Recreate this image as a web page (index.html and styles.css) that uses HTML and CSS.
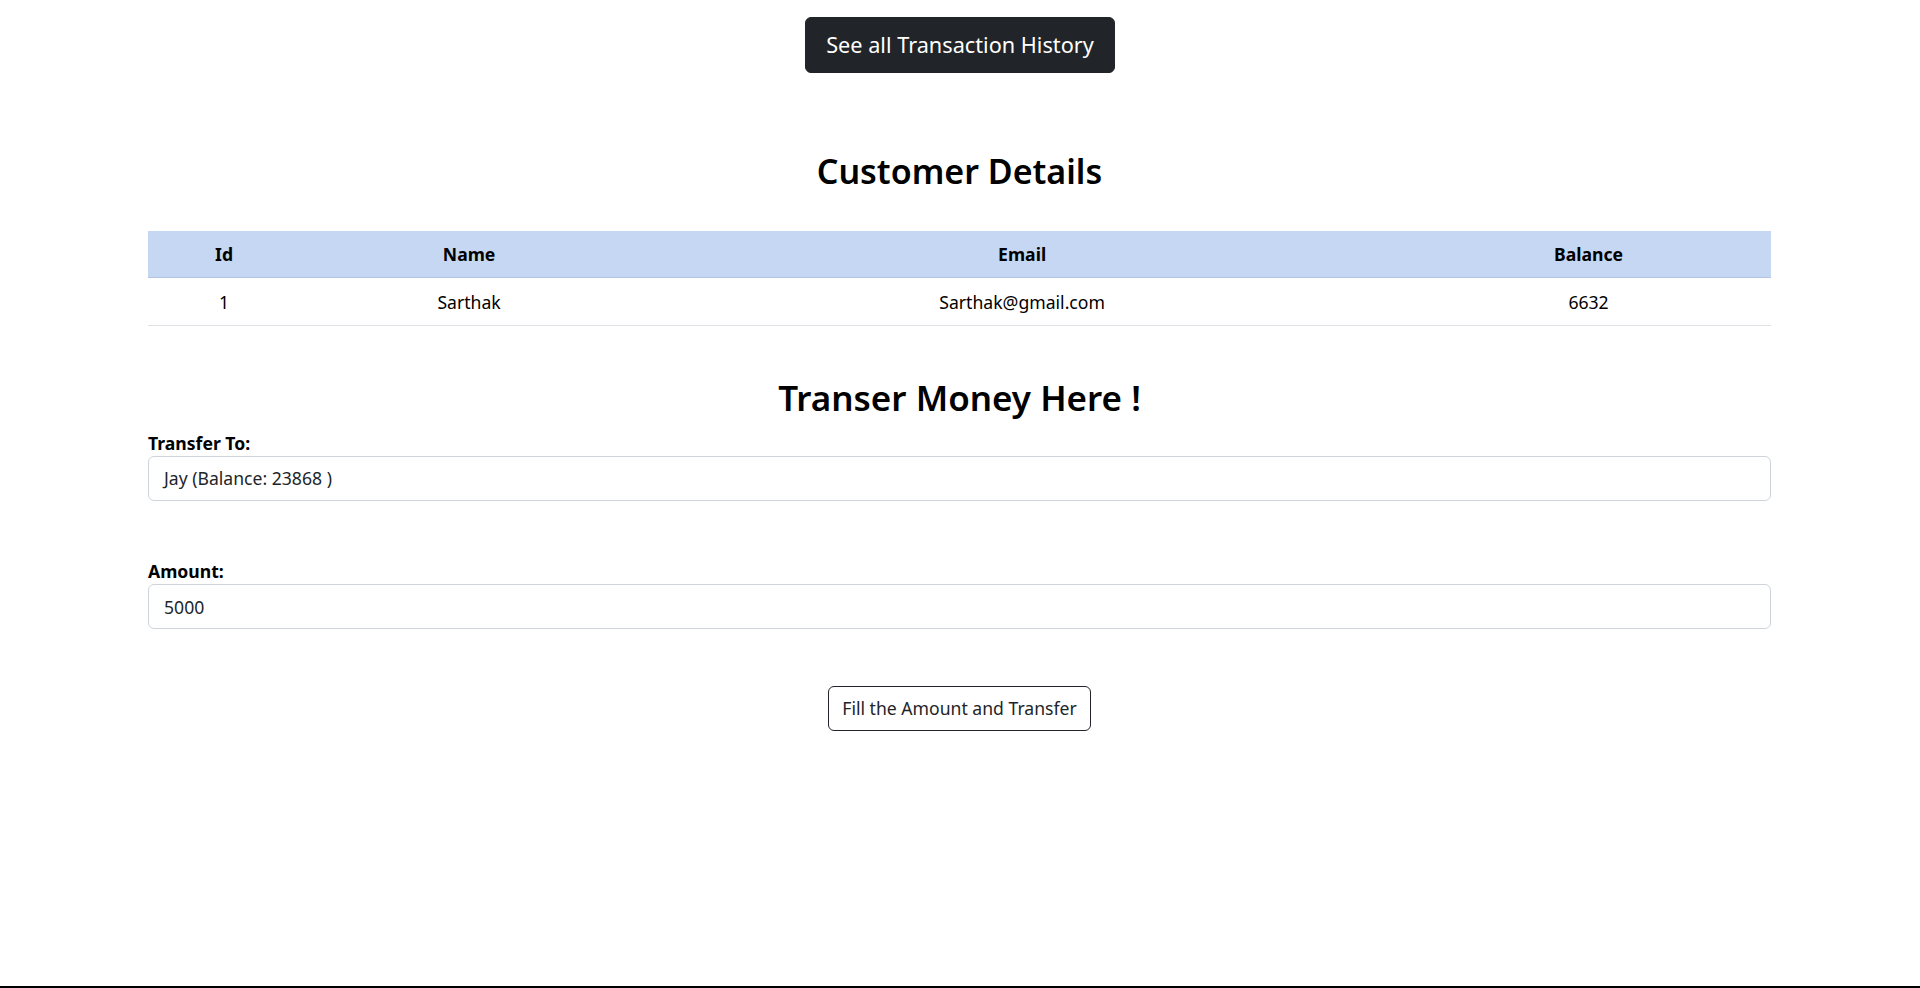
FILE: index.html
```html
<!DOCTYPE html>
<html lang="en">
<head>
<meta charset="utf-8">
<title>Customer Details</title>
<link rel="stylesheet" href="styles.css">
</head>
<body>
<div class="page">
  <div class="top-bar">
    <a class="btn btn-dark" href="#">See all Transaction History</a>
  </div>

  <main class="container">
    <h2 class="section-title first">Customer Details</h2>
    <table class="details">
      <colgroup>
        <col class="c-id">
        <col class="c-name">
        <col class="c-email">
        <col class="c-balance">
      </colgroup>
      <thead>
        <tr><th>Id</th><th>Name</th><th>Email</th><th>Balance</th></tr>
      </thead>
      <tbody>
        <tr><td>1</td><td>Sarthak</td><td>Sarthak@gmail.com</td><td>6632</td></tr>
      </tbody>
    </table>

    <h2 class="section-title second">Transer Money Here !</h2>
    <form class="transfer-form">
      <div class="field">
        <label class="field-label" for="to">Transfer To:</label>
        <div class="select-box" id="to">Jay (Balance: 23868 )</div>
      </div>
      <div class="field field-amount">
        <label class="field-label" for="amount">Amount:</label>
        <input class="text-input" id="amount" type="text" value="5000">
      </div>
      <div class="actions">
        <button class="btn btn-outline" type="button">Fill the Amount and Transfer</button>
      </div>
    </form>
  </main>

  <footer class="bottom-line"></footer>
</div>
</body>
</html>
```

FILE: styles.css
```css
* { box-sizing: border-box; }

html, body {
  margin: 0;
  padding: 0;
  background: #fff;
}

body {
  font-family: "Noto Sans", "Open Sans", sans-serif;
  font-size: 17.6px;
  line-height: 24px;
  color: #212529;
}

.page {
  display: flex;
  flex-direction: column;
  min-height: 100vh;
}

.top-bar {
  display: flex;
  justify-content: center;
  padding-top: 17px;
}

.btn {
  display: inline-block;
  text-decoration: none;
  font-family: inherit;
  cursor: pointer;
  border-radius: 6px;
}

.btn-dark {
  background: #212529;
  color: #fff;
  border: 1px solid #212529;
  font-size: 21.7px;
  line-height: 34px;
  padding: 10px 20px;
}

.container {
  padding: 0 149px 0 148px;
}

.section-title {
  margin: 0;
  text-align: center;
  font-size: 34px;
  line-height: 43px;
  font-weight: 600;
  color: #000;
}

.section-title.first {
  margin-top: 77px;
  margin-bottom: 38px;
}

.section-title.second {
  font-size: 35px;
  margin-top: 50px;
  margin-bottom: 12px;
}

.details {
  width: 100%;
  border-collapse: collapse;
  table-layout: fixed;
  color: #000;
}

.c-id { width: 9.37%; }
.c-name { width: 20.83%; }
.c-email { width: 47.32%; }
.c-balance { width: 22.48%; }

.details th,
.details td {
  text-align: center;
  line-height: 24px;
  padding: 11px 8px;
}

.details th {
  background: #c5d7f2;
  font-weight: 700;
  border-bottom: 1px solid #b3c5e3;
}

.details td {
  padding-top: 12px;
  border-bottom: 1px solid #dee2e6;
}

.field-label {
  display: block;
  font-weight: 700;
  color: #000;
  line-height: 24px;
  margin-bottom: 1px;
}

.field-amount {
  margin-top: 58px;
}

.select-box,
.text-input {
  display: block;
  width: 100%;
  height: 45px;
  padding: 9px 15px;
  font-family: inherit;
  font-size: 17.6px;
  line-height: 25px;
  color: #212529;
  background: #fff;
  border: 1px solid #ced4da;
  border-radius: 6px;
  margin: 0;
}

.actions {
  display: flex;
  justify-content: center;
  margin-top: 57px;
}

.btn-outline {
  background: #fff;
  color: #212529;
  border: 1px solid #212529;
  font-size: 17.6px;
  line-height: 23px;
  padding: 10px 13px;
}

.bottom-line {
  margin-top: auto;
  height: 2px;
  margin-bottom: 0;
  border-top: 2px solid #000;
}
```
